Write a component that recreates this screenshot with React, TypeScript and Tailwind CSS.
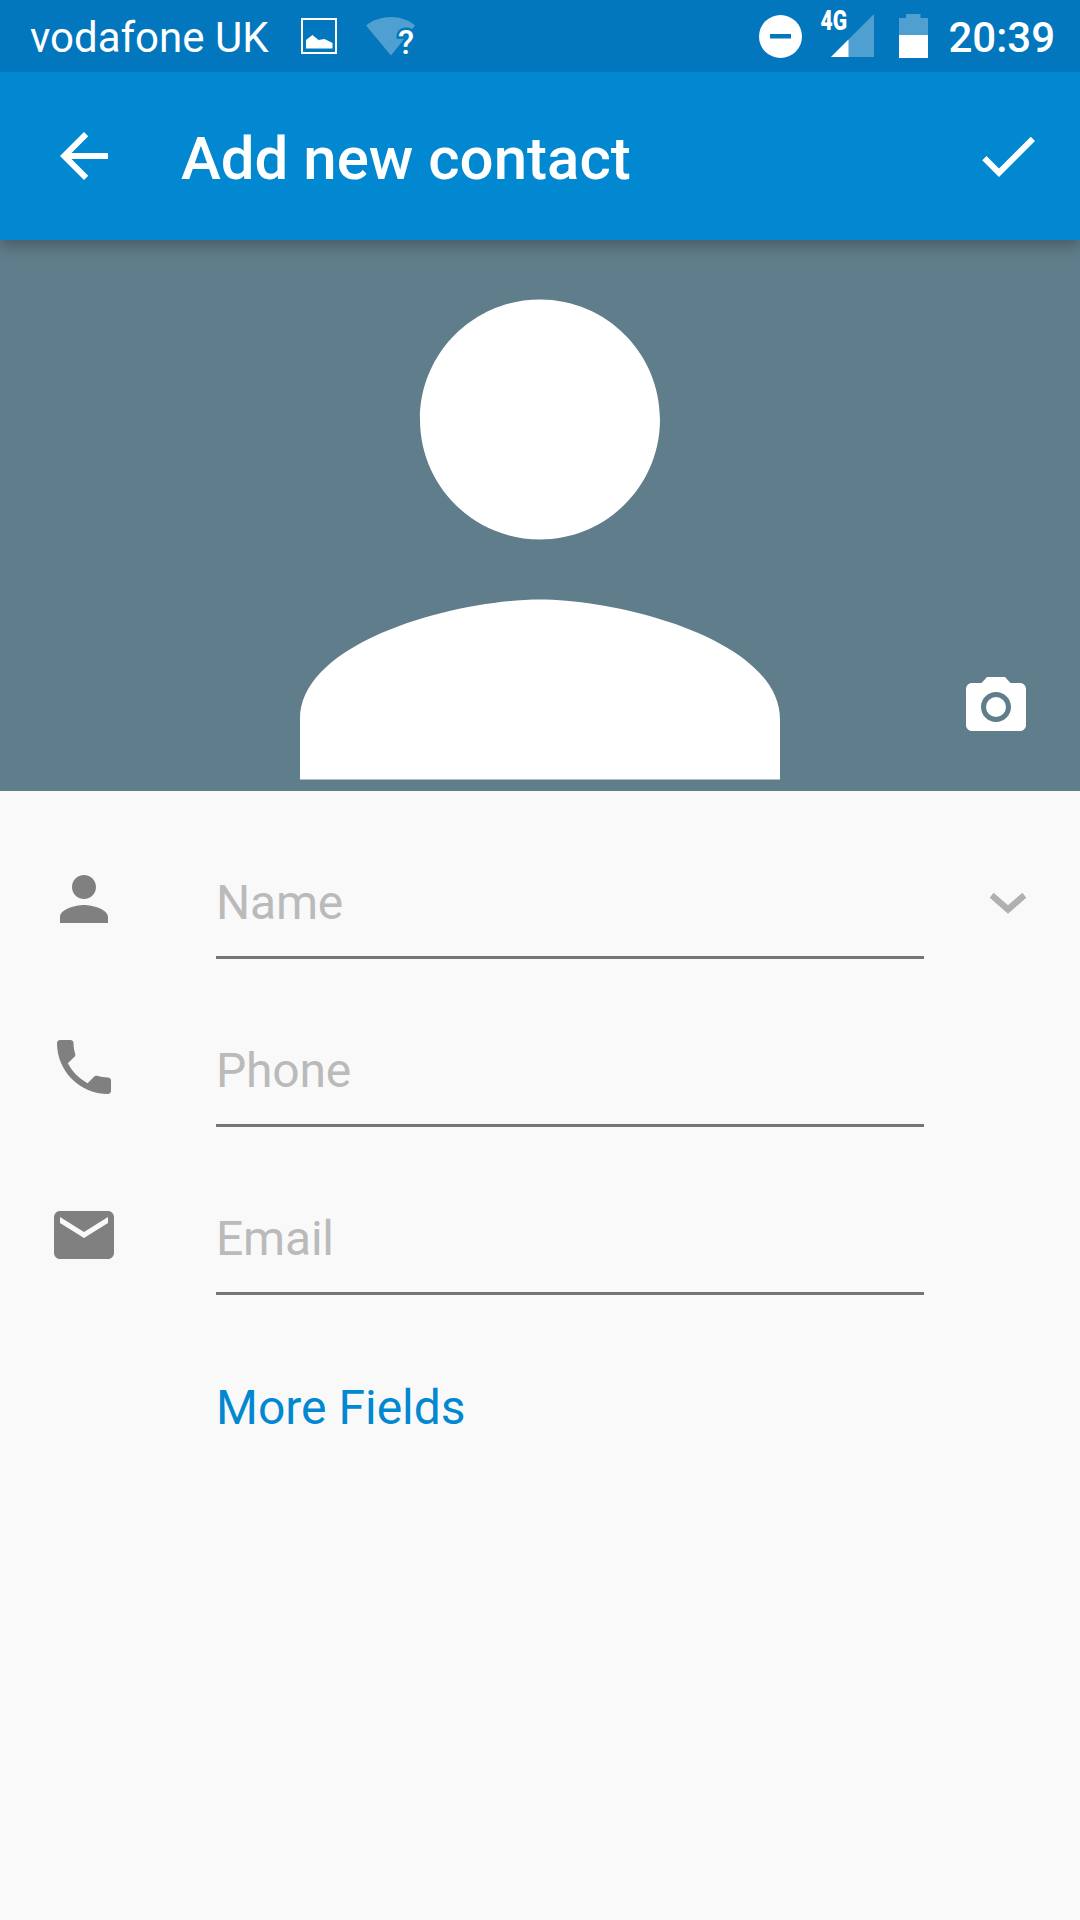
import { useState } from 'react';
import type { ReactNode } from 'react';

interface IconProps {
  d: string;
  className?: string;
}

function Icon({ d, className = '' }: IconProps) {
  return (
    <svg className={`size-18 shrink-0 ${className}`} viewBox="0 0 24 24" fill="currentColor">
      <path d={d} />
    </svg>
  );
}

const icons = {
  back: 'M20 11H7.83l5.59-5.59L12 4l-8 8 8 8 1.41-1.41L7.83 13H20v-2z',
  check: 'M9 16.17L4.83 12l-1.42 1.41L9 19 21 7l-1.41-1.41z',
  person: 'M12 12c2.21 0 4-1.79 4-4s-1.79-4-4-4-4 1.79-4 4 1.79 4 4 4zm0 2c-2.67 0-8 1.34-8 4v2h16v-2c0-2.66-5.33-4-8-4z',
  phone:
    'M6.62 10.79c1.44 2.83 3.76 5.14 6.59 6.59l2.2-2.2c.27-.27.67-.36 1.02-.24 1.12.37 2.33.57 3.57.57.55 0 1 .45 1 1V20c0 .55-.45 1-1 1-9.39 0-17-7.61-17-17 0-.55.45-1 1-1h3.5c.55 0 1 .45 1 1 0 1.25.2 2.45.57 3.57.11.35.03.74-.25 1.02l-2.2 2.2z',
  email: 'M20 4H4c-1.1 0-1.99.9-1.99 2L2 18c0 1.1.9 2 2 2h16c1.1 0 2-.9 2-2V6c0-1.1-.9-2-2-2zm0 4l-8 5-8-5V6l8 5 8-5v2z',
  camera:
    'M12 8.67a3.33 3.33 0 1 0 0 6.66 3.33 3.33 0 1 0 0-6.66zM9 2L7.17 4H4c-1.1 0-2 .9-2 2v12c0 1.1.9 2 2 2h16c1.1 0 2-.9 2-2V6c0-1.1-.9-2-2-2h-3.17L15 2H9zm3 15c-2.76 0-5-2.24-5-5s2.24-5 5-5 5 2.24 5 5-2.24 5-5 5z',
  expand: 'M7.2 7.9L12 12.05l4.8-4.15 1.3 1.65-6.1 5.4-6.1-5.4z',
};

function StatusBar() {
  return (
    <header className="z-20 flex h-18 items-center bg-[#0277bd] pl-[30px] pr-[25px] text-[42px] leading-[72px] text-white">
      <span className="h-18 pt-0.5">vodafone UK</span>
      <svg className="ml-8 h-18 w-9" viewBox="0 0 36 72">
        <rect x="1" y="19" width="34" height="34" fill="none" stroke="#fff" strokeWidth="2" />
        <path d="M5 48.500V40l6.500-5 6 5 6-1 8 4v5.500z" fill="#fff" />
      </svg>
      <svg className="ml-[29px] h-18 w-[50px]" viewBox="0 0 50 72">
        <path d="M0 25.500C14 14 36 14 49 25.500L25 55.500z" fill="#4f9fd1" />
        <text x="32" y="54" className="text-[33px] font-medium" fill="#fff" stroke="#0277bd" strokeWidth="5" paintOrder="stroke">
          ?
        </text>
      </svg>
      <div className="ml-auto flex items-center">
        <svg className="h-18 w-[43px]" viewBox="0 0 43 72">
          <circle cx="21.500" cy="36.500" r="21.500" fill="#fff" />
          <path d="M11 34h21v4.500H11z" fill="#0277bd" />
        </svg>
        <svg className="ml-[17px] h-18 w-[56px]" viewBox="0 0 56 72">
          <path d="M55 14v43H12z" fill="#4f9fd1" />
          <path d="M29.500 39.500V57H12z" fill="#fff" />
          <text x="1.500" y="29.500" className="text-[27px] font-black" fill="#fff" textLength="26.500" lengthAdjust="spacingAndGlyphs">
            4G
          </text>
        </svg>
        <svg className="ml-6 h-18 w-[29px]" viewBox="0 0 29 72">
          <path d="M0 18h7v-4h14.500v4H29v17H0z" fill="#4f9fd1" />
          <path d="M0 35h29v23H0z" fill="#fff" />
        </svg>
        <span className="ml-5 h-18 pt-0.5 font-medium">20:39</span>
      </div>
    </header>
  );
}

interface FieldProps {
  label: string;
  icon: string;
  type?: string;
  children?: ReactNode;
}

function Field({ label, icon, type = 'text', children }: FieldProps) {
  const [value, setValue] = useState('');

  return (
    <div className="flex h-[168px] items-start pl-12 pr-9">
      <Icon d={icon} className="mt-6 text-[#808080]" />
      <input
        type={type}
        placeholder={label}
        aria-label={label}
        value={value}
        onChange={(e) => setValue(e.target.value)}
        className="ml-24 mr-12 h-30 w-[708px] border-b-3 border-[#757575] bg-transparent pt-[11px] pb-[1px] text-[48px] leading-[56px] tracking-[-0.2px] text-[#212121] outline-none placeholder:text-[#bababa]"
      />
      {children}
    </div>
  );
}

export default function App() {
  return (
    <div className="flex h-[1920px] w-[1080px] flex-col bg-[#f9f9f9] font-['Roboto',sans-serif]">
      <StatusBar />

      {/* Toolbar */}
      <div className="z-10 flex h-[168px] items-center bg-[#0288d1] pl-12 pr-9 text-white shadow-[0_6px_14px_rgba(0,0,0,0.26)]">
        <button aria-label="Back">
          <Icon d={icons.back} />
        </button>
        <h1 className="ml-[61px] pt-1.5 text-[60px] font-medium leading-[72px]">Add new contact</h1>
        <button aria-label="Save" className="ml-auto">
          <Icon d={icons.check} />
        </button>
      </div>

      {/* Contact photo */}
      <div className="relative h-[551px] bg-[#607d8b] text-white">
        <svg className="size-full" viewBox="-6 2.017 36 18.367" fill="currentColor">
          <path d={icons.person} />
        </svg>
        <button aria-label="Take photo" className="absolute right-12 bottom-12">
          <Icon d={icons.camera} />
        </button>
      </div>

      <form className="flex flex-col pt-12">
        <Field label="Name" icon={icons.person}>
          <button type="button" aria-label="More name fields" className="mt-[30px]">
            <Icon d={icons.expand} className="text-[#b0b0b0]" />
          </button>
        </Field>
        <Field label="Phone" icon={icons.phone} type="tel" />
        <Field label="Email" icon={icons.email} type="email" />
        <button type="button" className="ml-[216px] mt-[37px] self-start text-[48px] leading-[56px] text-[#0288d1]">
          More Fields
        </button>
      </form>
    </div>
  );
}
